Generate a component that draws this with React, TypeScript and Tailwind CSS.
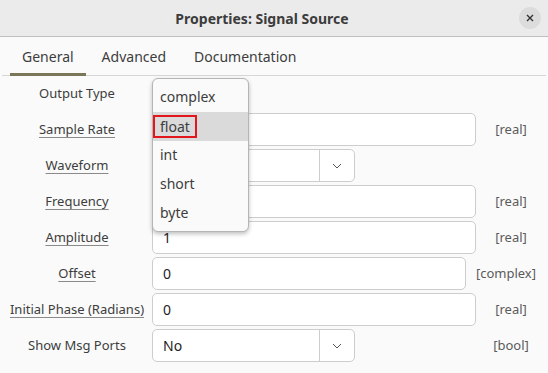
import React from "react";

const rows = [
  { label: "Output Type", link: false, kind: "none" },
  { label: "Sample Rate", link: true, kind: "entry", value: "", type: "[real]" },
  { label: "Waveform", link: true, kind: "combo", value: "" },
  { label: "Frequency", link: true, kind: "entry", value: "", type: "[real]" },
  { label: "Amplitude", link: true, kind: "entry", value: "1", type: "[real]" },
  { label: "Offset", link: true, kind: "entry", value: "0", type: "[complex]" },
  { label: "Initial Phase (Radians)", link: true, kind: "entry", value: "0", type: "[real]" },
  { label: "Show Msg Ports", link: false, kind: "combo", value: "No", type: "[bool]" },
];

function Chevron() {
  return (
    <svg width="10" height="6" viewBox="0 0 10 6" fill="none">
      <polyline points="1,1 5,5 9,1" stroke="#555" strokeWidth="1" />
    </svg>
  );
}

function Combo({ value }: { value: string }) {
  return (
    <div className="flex h-[33px] w-[203px] items-center rounded-[5px] border border-[#cdcdcd] bg-white">
      <span className="flex-1 pl-[10px] text-[14px] text-[#1e1e1e]">{value}</span>
      <span className="flex h-full w-[35px] items-center justify-center border-l border-[#cdcdcd]">
        <Chevron />
      </span>
    </div>
  );
}

export default function App() {
  return (
    <div className="relative h-[373px] w-[548px] overflow-hidden bg-[#fafafa] font-['Noto_Sans',sans-serif] text-[#3d3d3d]">
      <div className="flex h-[37px] items-center border-b border-[#bfbfbf] bg-[#ebebeb]">
        <div className="flex-1 pl-[12px] text-center text-[14px] font-bold text-[#3c3c3c]">
          Properties: Signal Source
        </div>
        <div className="flex w-[36px] items-center justify-center">
          <span className="flex h-[22px] w-[22px] items-center justify-center rounded-full bg-[#dcdcdc]">
            <svg width="8" height="8" viewBox="0 0 8 8">
              <path d="M1 1L7 7M7 1L1 7" stroke="#333" strokeWidth="1.4" />
            </svg>
          </span>
        </div>
      </div>

      <div className="mx-[2px] flex h-[39px] items-stretch gap-[4px] border-b border-[#d6d6d6] pl-[8px] text-[14px]">
        <div className="-mb-px flex items-center border-b-[3px] border-[#7a7658] px-[12px] pt-[3px] text-[#3d3d3d]">
          General
        </div>
        <div className="flex items-center px-[12px] text-[#3d3d3d]">Advanced</div>
        <div className="flex items-center px-[12px] text-[#3d3d3d]">Documentation</div>
      </div>

      <div className="flex flex-col gap-[3px] pt-[1px]">
        {rows.map((r) => (
          <div key={r.label} className="flex h-[33px] items-center">
            <div className="ml-[8px] w-[138px] text-center text-[13px]">
              <span
                className={
                  r.link
                    ? "underline decoration-[#8a8a8a] underline-offset-[3px]"
                    : ""
                }
              >
                {r.label}
              </span>
            </div>
            <div className="ml-[6px] flex flex-1 items-center">
              {r.kind === "entry" && (
                <div className="flex h-[33px] flex-1 items-center rounded-[5px] border border-[#cdcdcd] bg-white pl-[10px] text-[14px] text-[#1e1e1e]">
                  {r.value}
                </div>
              )}
              {r.kind === "combo" && (
                <div className="flex-1">
                  <Combo value={r.value ?? ""} />
                </div>
              )}
            </div>
            {r.type ? (
              <div className="ml-[10px] mr-[12px] min-w-[50px] text-center text-[13px] text-[#5a5a5a]">
                {r.type}
              </div>
            ) : null}
          </div>
        ))}
      </div>

      <div className="absolute left-[152px] top-[78px] w-[97px] rounded-[6px] border border-[#b5b5b5] bg-[#fafafa] pt-[4px] pb-[3px] text-[14px] text-[#3d3d3d] shadow-[0_2px_4px_rgba(0,0,0,0.25)]">
        <div className="flex h-[29px] items-center pb-[2px] pl-[7px]">complex</div>
        <div className="flex h-[29px] items-center bg-[#dadada]">
          <span className="flex h-[23px] items-center border-2 border-[#e3151d] px-[5px]">
            float
          </span>
        </div>
        <div className="flex h-[29px] items-center pb-[2px] pl-[7px]">int</div>
        <div className="flex h-[29px] items-center pb-[2px] pl-[7px]">short</div>
        <div className="flex h-[29px] items-center pb-[2px] pl-[7px]">byte</div>
      </div>
    </div>
  );
}
